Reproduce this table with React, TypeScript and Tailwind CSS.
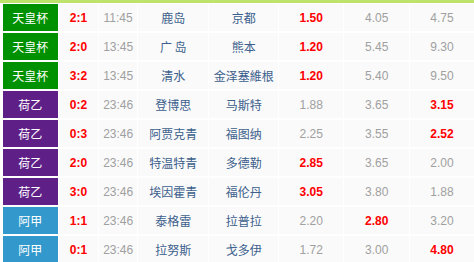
type Row = {
  league: string;
  score: string;
  time: string;
  home: string;
  away: string;
  odds: [string, string, string];
  hot: number;
};

const leagueBg: Record<string, string> = {
  天皇杯: "bg-[#009100]",
  荷乙: "bg-[#5e1f87]",
  阿甲: "bg-[#3399cc]",
};

const rows: Row[] = [
  { league: "天皇杯", score: "2:1", time: "11:45", home: "鹿岛", away: "京都", odds: ["1.50", "4.05", "4.75"], hot: 0 },
  { league: "天皇杯", score: "2:0", time: "13:45", home: "广 岛", away: "熊本", odds: ["1.20", "5.45", "9.30"], hot: 0 },
  { league: "天皇杯", score: "3:2", time: "13:45", home: "清水", away: "金泽塞維根", odds: ["1.20", "5.40", "9.50"], hot: 0 },
  { league: "荷乙", score: "0:2", time: "23:46", home: "登博思", away: "马斯特", odds: ["1.88", "3.65", "3.15"], hot: 2 },
  { league: "荷乙", score: "0:3", time: "23:46", home: "阿贾克青", away: "福图纳", odds: ["2.25", "3.55", "2.52"], hot: 2 },
  { league: "荷乙", score: "2:0", time: "23:46", home: "特温特青", away: "多德勒", odds: ["2.85", "3.65", "2.00"], hot: 0 },
  { league: "荷乙", score: "3:0", time: "23:46", home: "埃因霍青", away: "福伦丹", odds: ["3.05", "3.80", "1.88"], hot: 0 },
  { league: "阿甲", score: "1:1", time: "23:46", home: "泰格雷", away: "拉普拉", odds: ["2.20", "2.80", "3.20"], hot: 1 },
  { league: "阿甲", score: "0:1", time: "23:46", home: "拉努斯", away: "戈多伊", odds: ["1.72", "3.00", "4.80"], hot: 2 },
];

const cjk = "font-['SimSun','Noto_Sans_CJK_SC',sans-serif]";
const num = "font-['Liberation_Sans',Arial,sans-serif]";

export default function App() {
  return (
    <div className="w-[474px] h-[262px] overflow-hidden bg-white">
      <div className="h-[3px] bg-[#bde36c]" />
      <div className="flex flex-col gap-[2px] pt-[1px] pl-[3px]">
        {rows.map((r, i) => (
          <div key={i} className="flex h-[27px] gap-[1px] shrink-0">
            <div
              className={`w-[55px] ${leagueBg[r.league]} text-white text-[12px] ${cjk} flex items-center justify-center`}
            >
              {r.league}
            </div>
            <div className={`w-[40px] bg-[#fafafa] flex items-center justify-center text-[12px] font-bold text-[#ff0000] ${num}`}>
              {r.score}
            </div>
            <div className={`w-[38px] bg-[#fafafa] flex items-center justify-center text-[12px] text-[#a0a0a0] ${num}`}>
              {r.time}
            </div>
            <div className={`w-[71px] bg-[#fafafa] flex items-center justify-center text-[12px] text-[#3c5f8c] ${cjk} whitespace-pre`}>
              {r.home}
            </div>
            <div className={`w-[69px] bg-[#fafafa] flex items-center justify-center text-[12px] text-[#3c5f8c] ${cjk}`}>
              {r.away}
            </div>
            {r.odds.map((o, j) => (
              <div
                key={j}
                className={`${j === 2 ? "w-[64px] shrink-0" : "w-[65px]"} bg-[#fafafa] flex items-center justify-center text-[12px] ${num} ${
                  j === r.hot ? "text-[#ff0000] font-bold" : "text-[#a0a0a0]"
                }`}
              >
                {o}
              </div>
            ))}
          </div>
        ))}
      </div>
    </div>
  );
}
